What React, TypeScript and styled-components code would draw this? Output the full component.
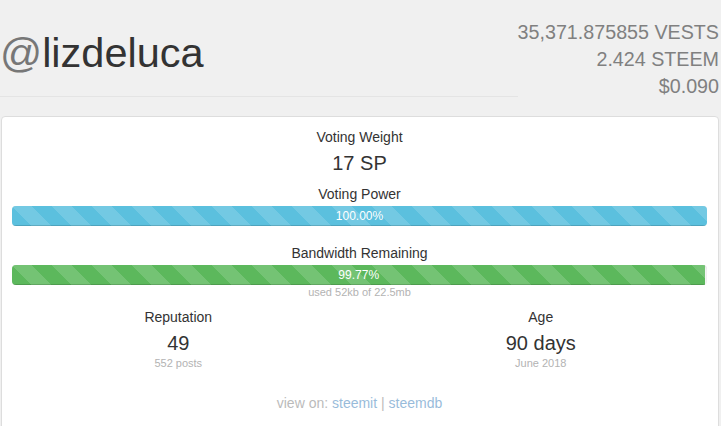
import styled, { createGlobalStyle, css } from 'styled-components';

const GlobalStyle = createGlobalStyle`
  html, body {
    margin: 0;
    padding: 0;
    background: #f0f0f0;
    font-family: "Liberation Sans", Arial, Helvetica, sans-serif;
    color: #333;
  }
`;

const Page = styled.div`
  width: 721px;
  height: 426px;
  overflow: hidden;
`;

const Header = styled.header`
  display: flex;
  align-items: flex-start;
`;

const TitleBlock = styled.div`
  flex: 1;
  padding: 30px 0 20px;
  border-bottom: 1px solid #e4e4e4;
`;

const Title = styled.h1`
  margin: 0;
  font-size: 41.5px;
  line-height: 46px;
  font-weight: 400;
  color: #333;
  white-space: nowrap;

  .at {
    color: #777;
  }
`;

const Balances = styled.div`
  padding: 19px 2px 0 0;
  text-align: right;
  font-size: 19.7px;
  line-height: 27px;
  color: #808080;
  white-space: nowrap;
`;

const Card = styled.section`
  margin: 16px 2px 0 1px;
  padding: 10px 11px 20px 10px;
  background: #fff;
  border: 1px solid #ddd;
  border-radius: 4px;
  text-align: center;
`;

const Label = styled.div<{ $gap?: number }>`
  margin-top: ${(p) => p.$gap ?? 0}px;
  font-size: 14px;
  line-height: 20px;
  color: #333;
`;

const Value = styled.div`
  margin-top: 5px;
  font-size: 20px;
  line-height: 22px;
  color: #333;
`;

const Note = styled.div<{ $gap?: number }>`
  margin-top: ${(p) => p.$gap ?? 0}px;
  font-size: 11px;
  line-height: 14px;
  color: #b3b3b3;
`;

const Progress = styled.div`
  margin-top: 2px;
  height: 20px;
  overflow: hidden;
  background: #f5f5f5;
  border-radius: 4px;
  box-shadow: inset 0 1px 2px rgba(0, 0, 0, 0.1);
`;

const Bar = styled.div<{ $tone: 'info' | 'success' }>`
  height: 100%;
  font-size: 12px;
  line-height: 20px;
  color: #fff;
  text-align: center;
  box-shadow: inset 0 -1px 0 rgba(0, 0, 0, 0.15);
  background-size: 40px 40px;
  ${(p) => css`
    background-color: ${p.$tone === 'info' ? '#5bc0de' : '#5cb85c'};
  `}
  background-image: linear-gradient(
    45deg,
    rgba(255, 255, 255, 0.15) 25%,
    transparent 25%,
    transparent 50%,
    rgba(255, 255, 255, 0.15) 50%,
    rgba(255, 255, 255, 0.15) 75%,
    transparent 75%,
    transparent
  );
`;

const Columns = styled.div`
  display: grid;
  grid-template-columns: 1fr 1fr;
  margin: 8px -15px 0;
`;

const Column = styled.div`
  padding: 0 15px;
`;

const Footer = styled.div`
  margin-top: 23px;
  font-size: 14px;
  line-height: 20px;
  color: #777;
  opacity: 0.5;

  a {
    color: #337ab7;
    text-decoration: none;
  }
`;

const stats = [
  { label: 'Reputation', value: '49', note: '552 posts' },
  { label: 'Age', value: '90 days', note: 'June 2018' },
];

const App = () => {
  const votingPower = 100;
  const bandwidth = 99.77;

  return (
    <Page>
      <GlobalStyle />
      <Header>
        <TitleBlock>
          <Title>
            <span className="at">@</span>lizdeluca
          </Title>
        </TitleBlock>
        <Balances>
          <div>35,371.875855 VESTS</div>
          <div>2.424 STEEM</div>
          <div>$0.090</div>
        </Balances>
      </Header>

      <Card>
        <Label>Voting Weight</Label>
        <Value>17 SP</Value>

        <Label $gap={10}>Voting Power</Label>
        <Progress>
          <Bar $tone="info" style={{ width: `${votingPower}%` }}>
            {votingPower.toFixed(2)}%
          </Bar>
        </Progress>

        <Label $gap={17}>Bandwidth Remaining</Label>
        <Progress>
          <Bar $tone="success" style={{ width: `${bandwidth}%` }}>
            {bandwidth.toFixed(2)}%
          </Bar>
        </Progress>
        <Note>used 52kb of 22.5mb</Note>

        <Columns>
          {stats.map((s) => (
            <Column key={s.label}>
              <Label>{s.label}</Label>
              <Value>{s.value}</Value>
              <Note $gap={2}>{s.note}</Note>
            </Column>
          ))}
        </Columns>

        <Footer>
          view on: <a href="#">steemit</a> | <a href="#">steemdb</a>
        </Footer>
      </Card>
    </Page>
  );
};

export default App;
